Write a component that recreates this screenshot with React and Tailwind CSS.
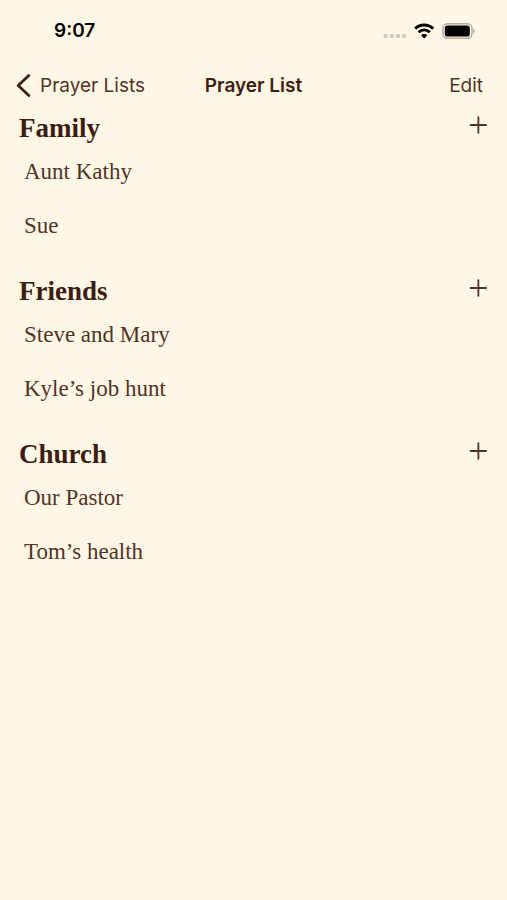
import React from 'react'

const groups = [
    { title: 'Family', people: ['Aunt Kathy', 'Sue'] },
    { title: 'Friends', people: ['Steve and Mary', 'Kyle’s job hunt'] },
    { title: 'Church', people: ['Our Pastor', 'Tom’s health'] },
]

function StatusBar() {
    return (
        <div className="flex h-[62px] items-center justify-between pl-[54px] pr-8 text-black">
            <span className="text-[19px] leading-6 font-semibold">9:07</span>
            <div className="flex items-center gap-2">
                <svg width="23" height="4" viewBox="0 0 23 4" className="mt-2.5" fill="#d2cbbd">
                    <rect x="0.6" y="0" width="4" height="4" rx="1.2" />
                    <rect x="6.9" y="0" width="4" height="4" rx="1.2" />
                    <rect x="13" y="0" width="4" height="4" rx="1.2" />
                    <rect x="19" y="0" width="4" height="4" rx="1.2" />
                </svg>
                <svg width="20" height="16" viewBox="0 0 20 16" fill="none" stroke="currentColor" strokeWidth="2.9">
                    <path d="M1.2 5.6C6.2 0.7 14.2 0.7 19.2 5.6" />
                    <path d="M4.6 9.3C7.8 6.1 12.6 6.1 15.8 9.3" />
                    <path d="M10.2 15.4L7 12.2C8.7 10.5 11.7 10.5 13.4 12.2Z" fill="currentColor" stroke="none" />
                </svg>
                <svg width="33" height="16" viewBox="0 0 33 16" fill="none">
                    <rect x="1" y="0.8" width="29" height="14.4" rx="4.4" stroke="#b5afa2" strokeWidth="1.5" />
                    <rect x="2.8" y="2.4" width="25" height="11.2" rx="2.6" fill="currentColor" />
                    <path d="M31 5.6C33.2 6.4 33.2 9.6 31 10.4Z" fill="#b5afa2" />
                </svg>
            </div>
        </div>
    )
}

function NavBar() {
    return (
        <nav className="grid h-12 grid-cols-[1fr_auto_1fr] items-center px-4 text-[19px] leading-6">
            <button className="flex items-center gap-2 justify-self-start">
                <svg width="16" height="24" viewBox="0 0 16 24" fill="none" stroke="#3d1c12" strokeWidth="2.8" strokeLinecap="round" strokeLinejoin="round">
                    <path d="M12.8 1.6L2.2 11.6L12.8 21.6" />
                </svg>
                Prayer Lists
            </button>
            <h1 className="font-semibold text-[#3d1c12]">Prayer List</h1>
            <button className="justify-self-end pr-2">Edit</button>
        </nav>
    )
}

function Group({ title, people }) {
    return (
        <section>
            <div className="flex h-[35px] items-center justify-between pl-[19px] pr-5">
                <h2 className="text-[27px] leading-8 font-bold text-[#3d1c12]">{title}</h2>
                <button aria-label={`Add to ${title}`} className="mb-1.5">
                    <svg width="18" height="18" viewBox="0 0 18 18" stroke="currentColor" strokeWidth="1.8" strokeLinecap="round">
                        <path d="M9.4 1.2V16.8M1.6 9H17.1" />
                    </svg>
                </button>
            </div>
            <ul>
                {people.map((name) => (
                    <li key={name} className="flex h-[54px] items-center pl-6 text-[23px] leading-8">{name}</li>
                ))}
            </ul>
        </section>
    )
}

export default function App() {
    return (
        <div className="min-h-screen bg-[#fff7e5] text-[#513327]">
            <header className="font-['Inter',sans-serif]">
                <StatusBar />
                <NavBar />
            </header>
            <main className="flex flex-col gap-5 font-['Palatino','Liberation_Serif',serif]">
                {groups.map((group) => (
                    <Group key={group.title} title={group.title} people={group.people} />
                ))}
            </main>
        </div>
    )
}
